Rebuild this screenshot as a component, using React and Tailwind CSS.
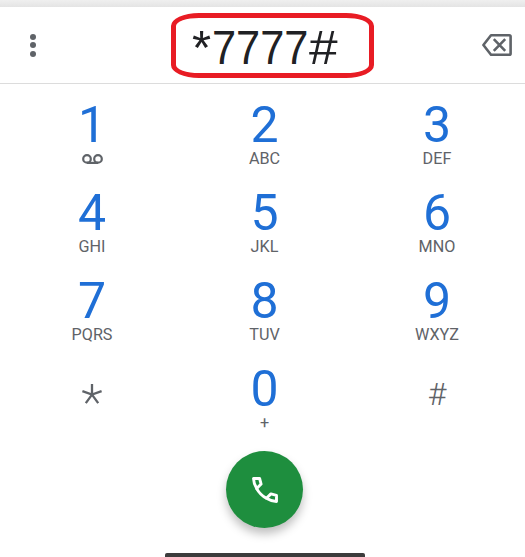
const KEYS = [
    { digit: '1', voicemail: true },
    { digit: '2', letters: 'ABC' },
    { digit: '3', letters: 'DEF' },
    { digit: '4', letters: 'GHI' },
    { digit: '5', letters: 'JKL' },
    { digit: '6', letters: 'MNO' },
    { digit: '7', letters: 'PQRS' },
    { digit: '8', letters: 'TUV' },
    { digit: '9', letters: 'WXYZ' },
    { symbol: '*' },
    { digit: '0', letters: '+' },
    { symbol: '#' },
];

const VoicemailIcon = () => (
    <svg className="w-[21px] h-[11px] mt-[4px]" viewBox="0 0 21 11" fill="none" stroke="#5f6368" strokeWidth="2.2">
        <circle cx="5" cy="4.9" r="3.8" />
        <circle cx="16" cy="4.9" r="3.8" />
        <path d="M5 8.9h11" />
    </svg>
);

const StarIcon = () => (
    <svg className="w-5 h-5" viewBox="0 0 20 20" fill="none" stroke="#5f6368" strokeWidth="2.3">
        <path d="M10 0v11M.4 7.2l9.6 3.4 9.6-3.4M3.8 19.2l6.2-8.6 6.2 8.6" />
    </svg>
);

const BackspaceIcon = () => (
    <svg className="w-[30px] h-[22px]" viewBox="0 0 30 22" fill="none" stroke="#5f6368" strokeWidth="2.6" strokeLinejoin="round">
        <path d="M9 1.3h18.3q1.3 0 1.3 1.3v16.8q0 1.3-1.3 1.3H9L1.4 11z" />
        <path d="M11.8 5.2l11.4 11.6M23.2 5.2L11.8 16.8" />
    </svg>
);

const PhoneIcon = () => (
    <svg className="w-[26px] h-[26px]" viewBox="0 0 26 26" fill="none" stroke="#fff" strokeWidth="2.9" strokeLinejoin="round">
        <path d="M1.5 1.5h6.1l1.5 5.6-4.4 4.5C2.7 8.4 1.6 5 1.5 1.5z" />
        <path d="M24.5 24.5v-6.1l-5.6-1.5-4.5 4.4c3.2 2 6.6 3.1 10.1 3.2z" />
        <path d="M4.7 11.6c2.3 4.2 5.5 7.4 9.7 9.7" />
    </svg>
);

const Key = ({ digit, letters, voicemail, symbol }) => {
    if (symbol) {
        return (
            <button className="h-[88px] flex items-start justify-center pt-[20px]">
                {symbol === '*' ? <StarIcon /> : <span className="text-[32px] leading-5 font-light text-[#5f6368]">#</span>}
            </button>
        );
    }

    return (
        <button className="h-[88px] flex flex-col items-center">
            <span className="text-[50px] leading-[50px] text-[#1f6fd6]">{digit}</span>
            {voicemail ? (
                <VoicemailIcon />
            ) : (
                <span className="text-[16.2px] leading-[18px] text-[#5f6368]">{letters}</span>
            )}
        </button>
    );
};

export default function App() {
    return (
        <div className="w-[525px] h-[557px] flex flex-col bg-white overflow-hidden font-[Roboto,sans-serif]">
            <div className="h-[7px] shrink-0 bg-linear-to-b from-[#efefef] to-[#e4e4e4]" />

            <header className="h-[77px] shrink-0 flex items-start justify-between border-b border-[#dcdcdc] pl-[30px] pr-[13px]">
                <button className="w-[6px] mt-[26.5px] flex flex-col items-center gap-[2.5px]">
                    <span className="w-[6px] h-[6px] rounded-full bg-[#5f6368]" />
                    <span className="w-[6px] h-[6px] rounded-full bg-[#5f6368]" />
                    <span className="w-[6px] h-[6px] rounded-full bg-[#5f6368]" />
                </button>
                <div className="w-[203px] h-[65px] mt-[6px] ml-[26px] border-[5px] border-[#e81c24] rounded-[28px/13px] flex justify-start pl-[16.5px] pt-[4px] font-['Liberation_Sans',sans-serif] text-[49px] leading-[50px] text-[#202124]">
                    <span className="w-[20px]">*</span>
                    <span className="w-[97px] origin-left scale-x-[0.885]">7777</span>
                    <span className="w-[28px] origin-left scale-x-[1.05]">#</span>
                </div>
                <button className="mt-[27px]">
                    <BackspaceIcon />
                </button>
            </header>

            <main className="grid grid-cols-[172px_173px_172px] justify-center pt-[16px] pl-[4px]">
                {KEYS.map((key) => (
                    <Key key={key.digit ?? key.symbol} {...key} />
                ))}
            </main>

            <footer className="flex flex-col items-center pl-[4px]">
                <button className="w-[77px] h-[77px] -mt-px rounded-full bg-[#1e8e3e] flex items-center justify-center shadow-[0_6px_10px_rgba(0,0,0,0.25)]">
                    <PhoneIcon />
                </button>
                <div className="w-[200px] h-[6px] mt-[25px] rounded-t-[2px] bg-[#3c3c3c]" />
            </footer>
        </div>
    );
}
